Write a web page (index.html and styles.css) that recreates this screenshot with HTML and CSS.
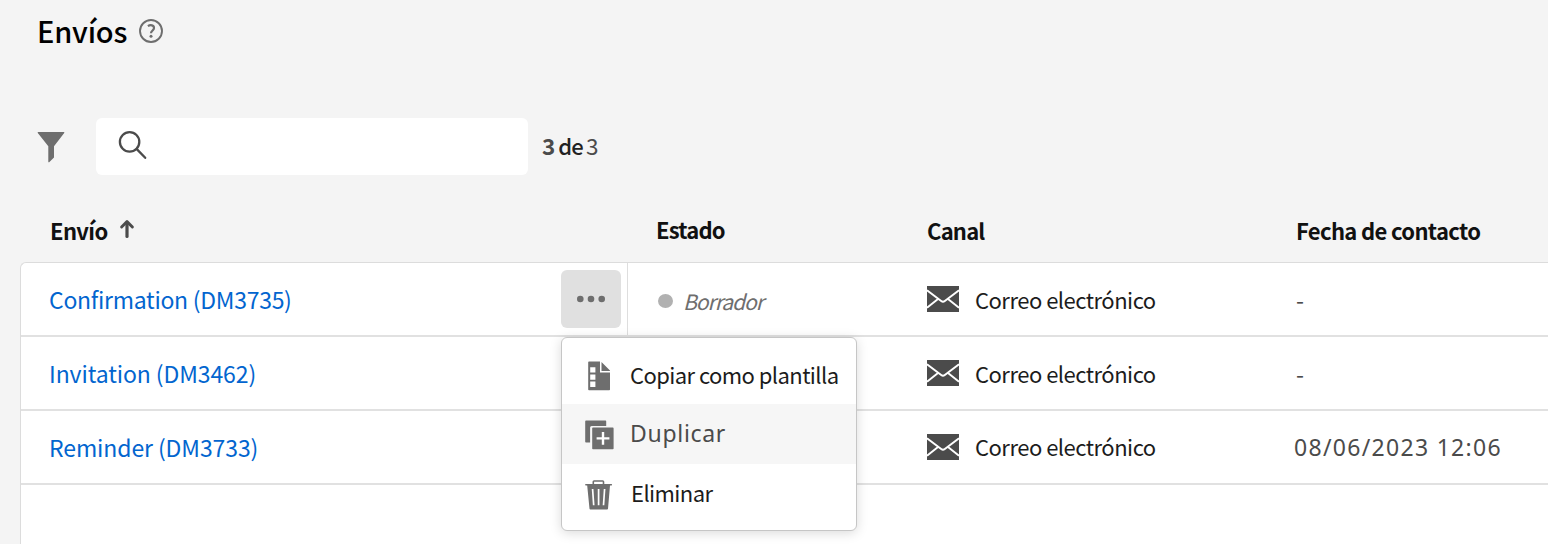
FILE: index.html
```
<!DOCTYPE html>
<html lang="es">
<head>
<meta charset="utf-8">
<title>Envíos</title>
<link rel="stylesheet" href="styles.css">
</head>
<body>
<svg class="defs" width="0" height="0">
  <symbol id="mail" viewBox="0 0 32 26">
    <rect width="32" height="26" fill="#4b4b4b"/>
    <path d="M0 4.2 14.2 15q1.8 1.4 3.6 0L32 4.2M0 21.8 11 13M32 21.8 21 13" fill="none" stroke="#fff" stroke-width="1.9"/>
  </symbol>
</svg>
<header class="page-header">
  <h1 class="title">Envíos</h1>
  <svg class="help" width="24" height="24" viewBox="0 0 24 24" fill="none">
    <circle cx="12" cy="12" r="11" stroke="#6e6e6e" stroke-width="1.9"/>
    <path d="M8.9 7.1C11.5 5.4 15 6.2 15 8.9c0 2.4-3 2.7-3 5.4" stroke="#6e6e6e" stroke-width="2.2"/>
    <circle cx="12" cy="17.3" r="1.5" fill="#6e6e6e"/>
  </svg>
</header>
<div class="toolbar">
  <svg class="funnel" width="28" height="32" viewBox="0 0 28 32"><path d="M1.3 1H26.7a.6.6 0 0 1 .5 1L17 15.2V26.5L12.2 31.2q-.9.5-.9-.7V15.2L.8 2a.6.6 0 0 1 .5-1Z" fill="#6e6e6e"/></svg>
  <div class="search">
    <svg width="30" height="30" viewBox="0 0 30 30" fill="none" stroke="#4b4b4b" stroke-width="2.3" stroke-linecap="round"><circle cx="11.6" cy="11.9" r="9.7"/><path d="M18.8 19.1 27.2 27.8"/></svg>
  </div>
  <p class="count"><b>3</b><span class="count-of">de</span><span>3</span></p>
</div>
<div class="grid thead">
  <div class="th th-name">Envío
    <svg width="16" height="20" viewBox="0 0 16 20" fill="none" stroke="#4b4b4b" stroke-linecap="round" stroke-linejoin="round"><path d="M8 17.4V4" stroke-width="3.2"/><path d="M2.6 8 8 2.6 13.4 8" stroke-width="2.9"/></svg>
  </div>
  <div class="th th-status">Estado</div>
  <div class="th th-channel">Canal</div>
  <div class="th">Fecha de contacto</div>
</div>
<main class="table">
  <div class="grid row">
    <div class="cell name divided"><a class="link link-long">Confirmation (DM3735)</a>
      <button class="more" aria-label="Más"><svg width="30" height="8" viewBox="0 0 30 8" fill="#6e6e6e"><circle cx="4.3" cy="4" r="3.3"/><circle cx="15" cy="4" r="3.3"/><circle cx="25.7" cy="4" r="3.3"/></svg></button>
    </div>
    <div class="cell status"><span class="dot"></span><i>Borrador</i></div>
    <div class="cell channel"><svg width="32" height="26"><use href="#mail"/></svg>Correo electrónico</div>
    <div class="cell date">-</div>
  </div>
  <div class="grid row">
    <div class="cell name"><a class="link">Invitation (DM3462)</a></div>
    <div class="cell status"></div>
    <div class="cell channel"><svg width="32" height="26"><use href="#mail"/></svg>Correo electrónico</div>
    <div class="cell date">-</div>
  </div>
  <div class="grid row">
    <div class="cell name"><a class="link">Reminder (DM3733)</a></div>
    <div class="cell status"></div>
    <div class="cell channel"><svg width="32" height="26"><use href="#mail"/></svg><span class="raised">Correo electrónico</span></div>
    <div class="cell date date-full">08/06/2023 12:06</div>
  </div>
  <div class="menu">
    <div class="item item-copy">
      <svg width="30" height="30" viewBox="0 0 30 30"><path d="M5 .5H16V11.5H26V28.5a.8.8 0 0 1-.8.8H5a.8.8 0 0 1-.8-.8V1.3A.8.8 0 0 1 5 .5ZM17.5 1 26 9.5V10H17.5Z" fill="#6e6e6e"/><path d="M6.2 6.2h5.2v5.4H6.2ZM6.2 13.4h5.2v5.4H6.2ZM6.2 20.6h5.2V26H6.2Z" fill="#fff"/></svg>
      <span>Copiar como plantilla</span>
    </div>
    <div class="item item-duplicate">
      <svg width="30" height="30" viewBox="0 0 30 30" fill="#6e6e6e"><path d="M2 .6H21.5a.7.7 0 0 1 .7.7V6H7.6a1.5 1.5 0 0 0-1.5 1.5V22.5H2a.8.8 0 0 1-.8-.8V1.4A.8.8 0 0 1 2 .6Z"/><rect x="8.2" y="7.6" width="21.4" height="21.6" rx=".8"/><path d="M19 12v12.8M12.6 18.4h12.8" stroke="#fff" stroke-width="2.4"/></svg>
      <span>Duplicar</span>
    </div>
    <div class="item item-delete">
      <svg width="30" height="30" viewBox="0 0 30 30"><path d="M9.3 4.3V1.8A.8.8 0 0 1 10.1 1h8.6a.8.8 0 0 1 .8.8V4.3" fill="none" stroke="#6e6e6e" stroke-width="1.6"/><path d="M1.8 4H27.4q.7.1.7.8T27.4 5.6H26L24 28.8q-.1.8-.9.8H6.4q-.8 0-.9-.8L3.2 5.6H1.8q-.7-.1-.7-.8T1.8 4Z" fill="#6e6e6e"/><path d="M8.6 9 9.7 25.2M14.6 9V25.2M20.6 9 19.5 25.2" stroke="#fff" stroke-width="1.7"/></svg>
      <span>Eliminar</span>
    </div>
  </div>
</main>
</body>
</html>
```
FILE: styles.css
```
* { box-sizing: border-box; }
body {
  margin: 0;
  height: 544px;
  overflow: hidden;
  display: flex;
  flex-direction: column;
  background: #f4f4f4;
  color: #1c1c1c;
  font: 22px "Noto Sans CJK SC", "Noto Sans", sans-serif;
}
svg { display: block; flex: none; }
.defs { position: absolute; }
.page-header {
  height: 61px;
  flex: none;
  display: flex;
  align-items: center;
  gap: 12px;
  padding-left: 37px;
}
.title { margin: 0; font-size: 29px; font-weight: 500; line-height: 61px; letter-spacing: -.2px; color: #000; }
.help { margin-top: 1px; }
.toolbar {
  height: 57px;
  flex: none;
  margin: 57px 0 24px;
  padding-left: 37px;
  display: flex;
  align-items: center;
}
.search {
  width: 432px;
  height: 57px;
  margin: 0 14px 0 31px;
  padding: 12px 0 0 22px;
  background: #fff;
  border-radius: 6px;
}
.count {
  display: flex;
  gap: 3px;
  margin: 0;
  padding-bottom: 3px;
  font-size: 22.5px;
  line-height: 54px;
  color: #4b4b4b;
}
.count-of { font-size: 22px; font-weight: 500; letter-spacing: -.8px; color: #222; }
.grid { display: grid; grid-template-columns: 607px 271px 369px 1fr; }
.thead { height: 63px; flex: none; padding-left: 21px; }
.th {
  display: flex;
  align-items: center;
  gap: 11px;
  padding-left: 28px;
  padding-bottom: 2px;
  font-weight: 700;
  letter-spacing: -.65px;
  color: #111;
}
.th-name { padding-left: 29px; }
.th-status { letter-spacing: -.8px; padding-bottom: 4px; }
.th-channel { letter-spacing: -.8px; }
.th-name svg { margin-bottom: 2px; }
.table {
  position: relative;
  flex: 1;
  margin-left: 20px;
  background: #fff;
  border: solid #dcdcdc;
  border-width: 1px 0 0 1px;
  border-radius: 6px 0 0 0;
}
.row { height: 74px; border-bottom: 2px solid #e1e1e1; }
.cell { display: flex; align-items: center; padding-left: 28px; }
.name { justify-content: space-between; padding-right: 6px; }
.divided { border-right: 1px solid #dedede; }
.link { font-size: 23px; letter-spacing: -.1px; color: #0265cf; }
.link-long { letter-spacing: -.28px; }
.more {
  display: grid;
  place-items: center;
  width: 60px;
  height: 58px;
  padding: 0;
  border: 0;
  border-radius: 6px;
  background: #e0e0e0;
}
.status { gap: 10px; padding-left: 30px; padding-top: 3px; font-size: 21px; letter-spacing: -1px; color: #6e6e6e; }
.dot { width: 15px; height: 14px; border-radius: 50%; background: #b1b1b1; }
.channel { gap: 16px; letter-spacing: -.5px; }
.raised { padding-bottom: 2px; }
.date { font-size: 23px; color: #4b4b4b; }
.date-full { padding-left: 26px; font-family: "Noto Sans", sans-serif; letter-spacing: 1.3px; }
.menu {
  position: absolute;
  left: 540px;
  top: 74px;
  width: 296px;
  height: 194px;
  padding-top: 8px;
  background: #fff;
  border: 1px solid #c6c6c6;
  border-radius: 6px;
  box-shadow: 0 2px 12px rgba(0, 0, 0, .15);
}
.item { display: flex; align-items: center; gap: 16px; padding-left: 22px; }
.item-copy { height: 58px; letter-spacing: -.57px; }
.item-copy svg { margin-top: 2px; }
.item-copy span { padding-bottom: 2px; }
.item-duplicate { height: 60px; background: #f6f6f6; font-family: "Noto Sans", sans-serif; font-size: 23px; letter-spacing: .7px; color: #4b4b4b; }
.item-duplicate svg { margin-top: 1px; }
.item-duplicate span { padding-bottom: 3px; }
.item-delete { height: 60px; gap: 17px; letter-spacing: -.57px; }
.item-delete svg { margin-top: 1px; }
.item-delete span { padding-bottom: 4px; }
```
